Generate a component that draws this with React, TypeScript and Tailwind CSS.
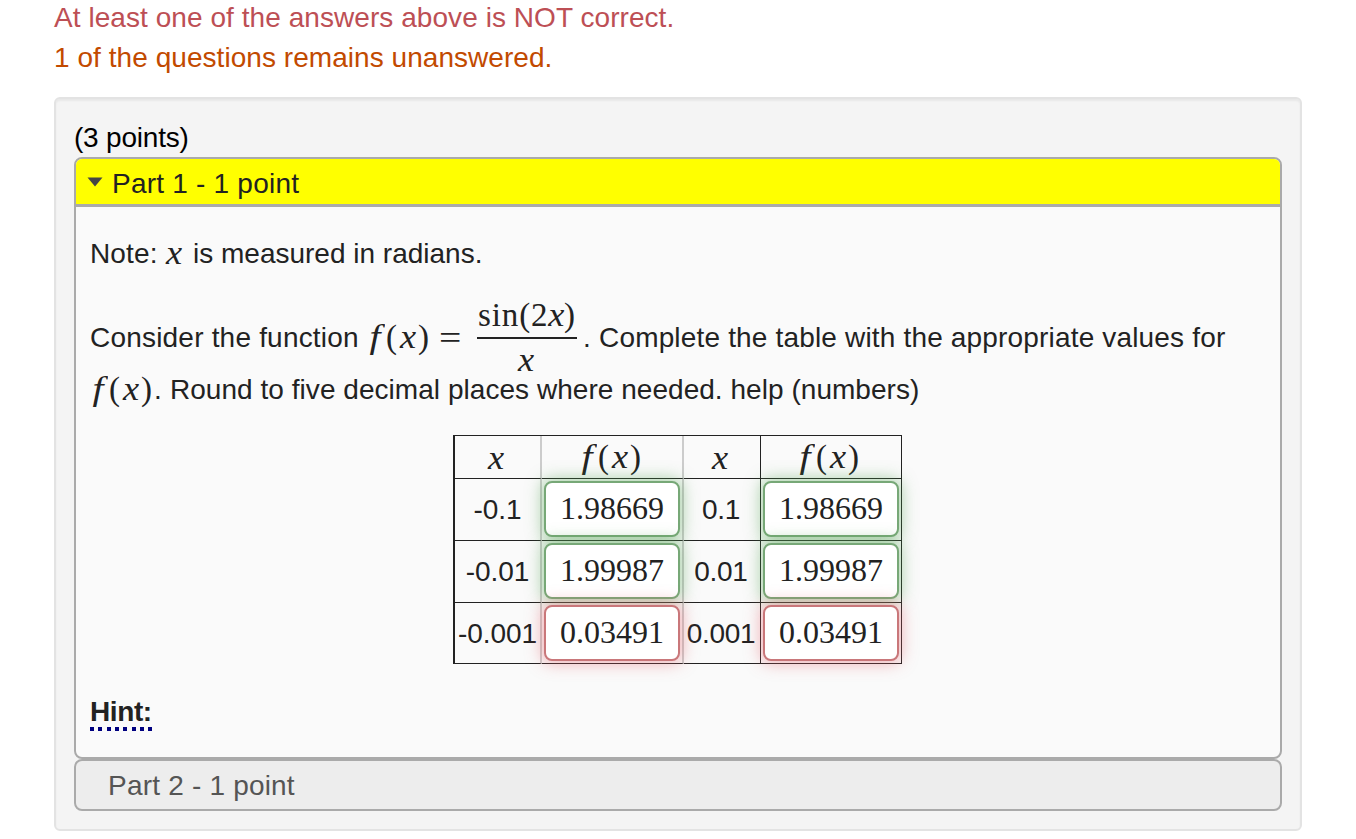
import { clsx } from "clsx";

type Answer = { value: string; correct: boolean };

const rows: { left: string; right: string; answer: Answer }[] = [
  { left: "-0.1", right: "0.1", answer: { value: "1.98669", correct: true } },
  { left: "-0.01", right: "0.01", answer: { value: "1.99987", correct: true } },
  { left: "-0.001", right: "0.001", answer: { value: "0.03491", correct: false } },
];

const serif = "font-['Liberation_Serif',serif] tracking-normal";
const math = `${serif} text-[33px] leading-none`;

const X = () => <i className="inline-block origin-left scale-x-110">x</i>;

const Fx = () => (
  <span className={clsx(math, "inline-flex h-[34px] w-[62px] text-left whitespace-nowrap")}>
    <i className="inline-block w-[18px] origin-left scale-x-120 pl-0.5">f</i>
    <span className="w-[15px] pl-px">(</span>
    <span className="w-[17px]"><X /></span>
    <span className="pl-px">)</span>
  </span>
);

const AnswerBox = ({ value, correct }: Answer) => (
  <div
    className={clsx(
      serif,
      "relative mb-px flex h-14 w-[136px] items-center justify-center rounded-lg border-2 bg-white pb-0.5 text-[32px] leading-none text-[#222]",
      correct
        ? "border-[#77a877] shadow-[0_0_16px_2px_rgba(81,163,81,0.5)]"
        : "border-[#c9777a] shadow-[0_0_16px_2px_rgba(230,100,110,0.5)]",
    )}
  >
    {value}
  </div>
);

const lightCell = "border-b border-r-2 border-b-[#222] border-r-[#ccc] p-0";
const darkCell = "border-b border-r border-[#222] p-0";

const ValuesTable = () => (
  <table className="ml-[363px] w-[449px] table-fixed border-separate border-spacing-0 border-l-2 border-t border-[#222] text-center leading-none">
    <colgroup>
      <col className="w-[87px]" />
      <col className="w-[142px]" />
      <col className="w-[77px]" />
      <col className="w-[141px]" />
    </colgroup>
    <tbody>
      <tr className="h-[43px]">
        <td className={clsx(math, lightCell, "pt-0.5 pr-1")}><X /></td>
        <td className={lightCell}><div className="flex justify-center pt-0.5 pr-1"><Fx /></div></td>
        <td className={clsx(math, darkCell, "pt-0.5 pr-1.5")}><X /></td>
        <td className={darkCell}><div className="flex justify-center pt-0.5 pr-1.5"><Fx /></div></td>
      </tr>
      {rows.map((row) => (
        <tr key={row.left} className={row.answer.correct ? "h-[62px]" : "h-[61px]"}>
          <td className={clsx(lightCell, "tracking-[-0.1px]", !row.answer.correct && "pt-px")}>{row.left}</td>
          <td className={clsx(lightCell, "pl-0.5")}><AnswerBox {...row.answer} /></td>
          <td className={clsx(darkCell, "pr-0.5 tracking-[-0.3px]", !row.answer.correct && "pt-px")}>{row.right}</td>
          <td className={clsx(darkCell, "pl-0.5")}><AnswerBox {...row.answer} /></td>
        </tr>
      ))}
    </tbody>
  </table>
);

export default function App() {
  return (
    <main className="h-[839px] overflow-hidden bg-white px-[54px] font-['Liberation_Sans',Arial,sans-serif] text-[28px] whitespace-nowrap text-[#222]">
      <p className="h-[35px] leading-[35px] tracking-[0.06px] text-[#bd4f55]">At least one of the answers above is NOT correct.</p>
      <p className="h-[62px] leading-[45px] tracking-[0.05px] text-[#c24a00]">1 of the questions remains unanswered.</p>

      <section className="h-[734px] w-[1248px] rounded-md border-2 border-[#e3e3e3] bg-[#f4f4f4] px-[18px] pt-[18px] shadow-[inset_0_2px_2px_rgba(0,0,0,0.05)]">
        <p className="h-10 leading-[41px] tracking-[-0.2px] text-black">(3 points)</p>

        <div className="h-[602px] overflow-hidden rounded-lg border-2 border-[#aaa] bg-[#fafafa]">
          <h2 className="flex h-12 items-center border-b-[3px] border-[#aaa] bg-[yellow] pt-1 pl-[11px] tracking-[0.22px]">
            <svg className="mr-[9px] mb-1 h-2.5 w-4" viewBox="0 0 16 10" fill="#454545">
              <path d="M.5.5h15L8 9.5z" />
            </svg>
            <span>Part 1 - 1 point</span>
          </h2>

          <div className="px-3.5 pt-[27px]">
            <p className="flex h-10 items-center leading-none">
              <span className="w-[76px] tracking-[0.15px]">Note:</span>
              <span className={clsx(math, "w-[27px] pb-px")}><X /></span>
              <span>is measured in radians.</span>
            </p>

            <div className="mt-[23px] flex h-[81px] items-center leading-none">
              <span className="w-[277px] tracking-[0.2px]">Consider the function</span>
              <span className="flex w-[69px]"><Fx /></span>
              <span className={clsx(math, "w-[41px] pt-0.5 pl-[3px]")}><span className="inline-block origin-left scale-x-120">=</span></span>
              <span className={clsx(math, "flex w-[100px] flex-col items-center")}>
                <span className="h-10 w-full border-b-2 border-[#222] text-center leading-[33px] tracking-[0.9px]">
                  sin(2<i className="inline-block scale-x-110">x</i>)
                </span>
                <span className="h-[38px] pr-1 leading-[43px]"><X /></span>
              </span>
              <span className="w-[22px] pl-1.5">.</span>
              <span className="tracking-[0.17px]">Complete the table with the appropriate values for</span>
            </div>
            <p className="flex h-6 items-center leading-none">
              <span className="flex w-[64px]"><Fx /></span>
              <span className="w-4">.</span>
              <span className="tracking-[0.04px]">Round to five decimal places where needed. help (numbers)</span>
            </p>

            <div className="mt-[33px]"><ValuesTable /></div>

            <p className="mt-[31px] flex">
              <b className="h-9 w-[62px] bg-[repeating-linear-gradient(90deg,#000080_0_4px,transparent_4px_8.3px)] bg-[length:100%_4px] bg-bottom bg-no-repeat leading-[34px] tracking-[-0.4px]">Hint:</b>
            </p>
          </div>
        </div>

        <h2 className="flex h-[52px] items-center rounded-lg border-2 border-[#aaa] bg-[#ededed] pt-0.5 pl-8 tracking-[0.2px] text-[#555]">
          Part 2 - 1 point
        </h2>
      </section>
    </main>
  );
}
